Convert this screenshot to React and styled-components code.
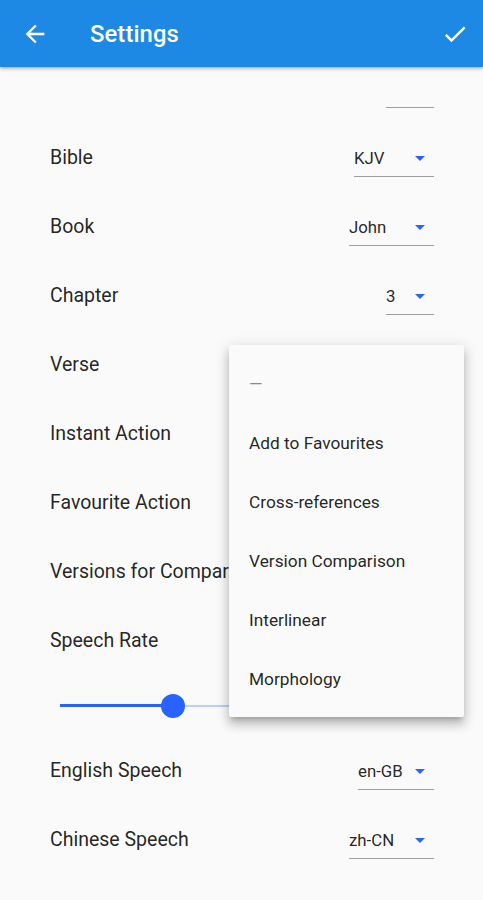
import React from "react";
import styled, { createGlobalStyle } from "styled-components";

const Global = createGlobalStyle`
  html, body { margin: 0; padding: 0; background: #fafafa; }
  body { font-family: Roboto, "Noto Sans", "Liberation Sans", sans-serif; }
  * { box-sizing: border-box; }
`;

const Screen = styled.div`
  position: relative;
  width: 483px;
  height: 900px;
  overflow: hidden;
  background: #fafafa;
`;

const AppBar = styled.header`
  position: relative;
  z-index: 2;
  height: 67px;
  background: #1e88e5;
  display: flex;
  align-items: center;
  padding: 0 14px 0 21px;
  box-shadow: 0 2px 4px rgba(0, 0, 0, 0.22), 0 1px 2px rgba(0, 0, 0, 0.14);
  color: #fff;
`;

const IconButton = styled.button`
  border: 0;
  background: none;
  padding: 0;
  width: 28px;
  height: 28px;
  display: flex;
  align-items: center;
  justify-content: center;
  color: #fff;
  svg { display: block; }
`;

const Title = styled.h1`
  flex: 1;
  margin: 0 0 0 41px;
  font-size: 23.8px;
  font-weight: 500;
  letter-spacing: 0.1px;
  color: #fff;
`;

const List = styled.div`
  display: flex;
  flex-direction: column;
  padding: 0 49px 0 50px;
`;

const Row = styled.div`
  height: ${(p) => p.$h || 69}px;
  display: flex;
  align-items: ${(p) => (p.$end ? "flex-end" : "center")};
  justify-content: space-between;
`;

const Label = styled.span`
  font-size: 19.5px;
  color: rgba(0, 0, 0, 0.87);
  white-space: nowrap;
`;

const Select = styled.div`
  width: ${(p) => p.$w}px;
  height: 38px;
  display: flex;
  align-items: center;
  justify-content: space-between;
  border-bottom: 1.5px solid #9e9e9e;
  margin-bottom: ${(p) => (p.$end ? 15 : 0)}px;
  padding-top: 1px;
`;

const SelectText = styled.span`
  font-size: 16.8px;
  color: rgba(0, 0, 0, 0.87);
`;

const DropArrow = styled.svg`
  width: 24px;
  height: 24px;
  margin-right: 2px;
  fill: #2962ff;
`;

const SliderRow = styled.div`
  height: 61px;
  display: flex;
  align-items: center;
  padding: 0 60px;
`;

const Track = styled.div`
  position: relative;
  flex: 1;
  height: 2px;
  background: #bcd0ff;
`;

const ActiveTrack = styled.div`
  position: absolute;
  left: 0;
  top: -0.5px;
  height: 3px;
  background: #2962ff;
`;

const Thumb = styled.div`
  position: absolute;
  top: 1px;
  width: 24px;
  height: 24px;
  margin: -12px 0 0 -12px;
  border-radius: 50%;
  background: #2962ff;
`;

const Menu = styled.ul`
  position: absolute;
  z-index: 3;
  left: 229px;
  top: 345px;
  width: 235px;
  margin: 0;
  padding: 9px 0;
  list-style: none;
  background: #fafafa;
  border-radius: 2px;
  box-shadow: 0 5px 5px -3px rgba(0, 0, 0, 0.2), 0 8px 10px 1px rgba(0, 0, 0, 0.14),
    0 3px 14px 2px rgba(0, 0, 0, 0.12);
`;

const MenuItem = styled.li`
  height: 59px;
  display: flex;
  align-items: center;
  padding: 0 20px;
  font-size: 17.3px;
  color: ${(p) => (p.$muted ? "#8a8a8a" : "rgba(0, 0, 0, 0.87)")};
  white-space: nowrap;
`;

const Arrow = () => (
  <DropArrow viewBox="0 0 24 24">
    <path d="M7 10l5 5 5-5z" />
  </DropArrow>
);

const Dropdown = ({ value, w, end }) => (
  <Select $w={w} $end={end}>
    <SelectText>{value}</SelectText>
    {value ? <Arrow /> : null}
  </Select>
);

const rows = [
  { label: "Bible", value: "KJV", w: 80 },
  { label: "Book", value: "John", w: 85 },
  { label: "Chapter", value: "3", w: 48 },
  { label: "Verse" },
  { label: "Instant Action" },
  { label: "Favourite Action" },
  { label: "Versions for Comparison" },
  { label: "Speech Rate" },
];

const menuItems = [
  "Add to Favourites",
  "Cross-references",
  "Version Comparison",
  "Interlinear",
  "Morphology",
];

export default function App() {
  const rate = 0.311;
  return (
    <Screen>
      <Global />
      <AppBar>
        <IconButton aria-label="Back">
          <svg width="28" height="28" viewBox="0 0 24 24" fill="#fff">
            <path d="M20 11H7.83l5.59-5.59L12 4l-8 8 8 8 1.41-1.41L7.83 13H20v-2z" />
          </svg>
        </IconButton>
        <Title>Settings</Title>
        <IconButton aria-label="Save">
          <svg width="28" height="28" viewBox="0 0 24 24" fill="#fff">
            <path d="M9 16.17L4.83 12l-1.42 1.41L9 19 21 7l-1.41-1.41z" />
          </svg>
        </IconButton>
      </AppBar>
      <List>
        <Row $h={56} $end>
          <span />
          <Dropdown value="" w={48} end />
        </Row>
        {rows.map((r) => (
          <Row key={r.label}>
            <Label>{r.label}</Label>
            {r.value ? <Dropdown value={r.value} w={r.w} /> : null}
          </Row>
        ))}
      </List>
      <SliderRow>
        <Track>
          <ActiveTrack style={{ width: `${rate * 100}%` }} />
          <Thumb style={{ left: `${rate * 100}%` }} />
        </Track>
      </SliderRow>
      <List>
        <Row>
          <Label>English Speech</Label>
          <Dropdown value="en-GB" w={76} />
        </Row>
        <Row>
          <Label>Chinese Speech</Label>
          <Dropdown value="zh-CN" w={85} />
        </Row>
      </List>
      <Menu>
        <MenuItem $muted>—</MenuItem>
        {menuItems.map((m) => (
          <MenuItem key={m}>{m}</MenuItem>
        ))}
      </Menu>
    </Screen>
  );
}
